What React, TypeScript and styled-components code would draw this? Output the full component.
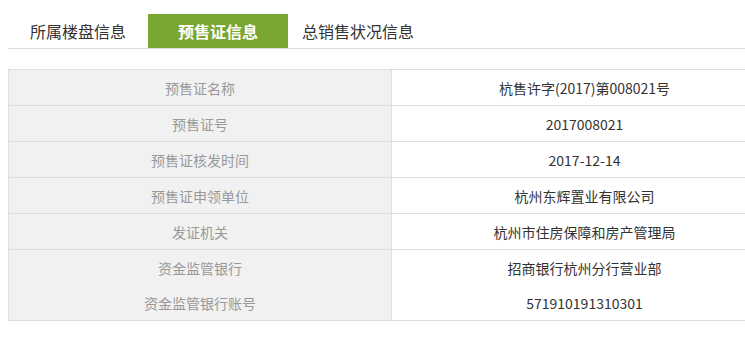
import React from "react";
import styled, { createGlobalStyle } from "styled-components";

const Global = createGlobalStyle`
  html, body { margin: 0; padding: 0; background: #fff; overflow: hidden; }
  body { font-family: "Noto Sans CJK SC", "Microsoft YaHei", sans-serif; }
`;

const Page = styled.div`
  width: 745px;
  height: 338px;
  overflow: hidden;
  padding: 14px 0 0 8px;
  box-sizing: border-box;
`;

const TabBar = styled.div`
  display: flex;
  width: 737px;
  border-bottom: 1px solid #dedede;
  height: 34px;
`;

const Tab = styled.div<{ $active?: boolean }>`
  width: 140px;
  height: 34px;
  display: flex;
  align-items: center;
  justify-content: center;
  font-size: 16px;
  color: ${(p) => (p.$active ? "#fff" : "#333")};
  font-weight: ${(p) => (p.$active ? 700 : 400)};
  background: ${(p) => (p.$active ? "#79a62e" : "transparent")};
`;

const Table = styled.div`
  margin-top: 20px;
  width: 768px;
  border: 1px solid #dedede;
  border-right: none;
  display: grid;
  grid-template-columns: 383px 1fr;
`;

const Cell = styled.div<{ $noLine?: boolean }>`
  height: 35px;
  display: flex;
  align-items: center;
  justify-content: center;
  font-size: 14px;
  border-bottom: ${(p) => (p.$noLine ? "none" : "1px solid #dedede")};
`;

const Label = styled(Cell)`
  background: #f1f1f1;
  color: #999;
  border-right: 1px solid #dedede;
`;

const Value = styled(Cell)`
  color: #333;
`;

const rows: [string, string][] = [
  ["预售证名称", "杭售许字(2017)第008021号"],
  ["预售证号", "2017008021"],
  ["预售证核发时间", "2017-12-14"],
  ["预售证申领单位", "杭州东辉置业有限公司"],
  ["发证机关", "杭州市住房保障和房产管理局"],
  ["资金监管银行", "招商银行杭州分行营业部"],
  ["资金监管银行账号", "571910191310301"],
];

export default function App() {
  return (
    <>
      <Global />
      <Page>
        <TabBar>
          <Tab>所属楼盘信息</Tab>
          <Tab $active>预售证信息</Tab>
          <Tab>总销售状况信息</Tab>
        </TabBar>
        <Table>
          {rows.map(([k, v], i) => {
            const noLine = i >= rows.length - 2;
            return (
              <React.Fragment key={k}>
                <Label $noLine={noLine}>{k}</Label>
                <Value $noLine={noLine}>{v}</Value>
              </React.Fragment>
            );
          })}
        </Table>
      </Page>
    </>
  );
}
